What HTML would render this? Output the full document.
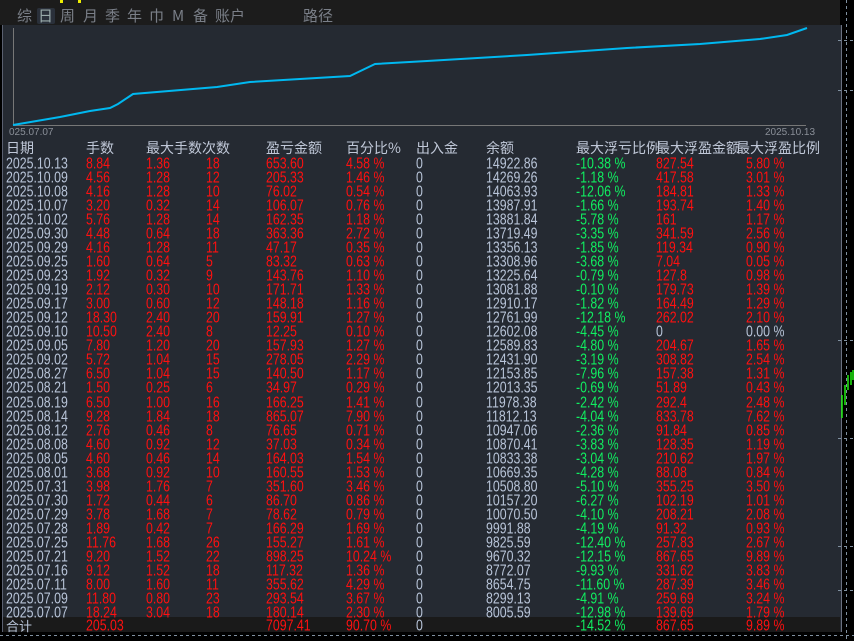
<!DOCTYPE html><html><head><meta charset="utf-8"><style>
body{margin:0;width:854px;height:641px;background:#000;position:relative;overflow:hidden;font-family:"Liberation Sans Narrow","Liberation Sans","Noto Sans CJK SC",sans-serif;}
.top{position:absolute;left:0;top:0;width:840px;height:25px;background:#1c1c1c;}
.panel{position:absolute;left:2px;top:25px;width:838px;height:607px;background:#252a32;border-left:1px solid #5a6070;border-right:1px solid #6a7080;}
.tab{position:absolute;top:7px;font-size:15px;color:#7a7f88;font-family:"Noto Sans CJK SC",sans-serif;line-height:18px;}
.r{position:absolute;left:0;width:840px;height:14px;font-size:13px;line-height:14px;white-space:nowrap;}
.r span{position:absolute;top:0;transform:scale(0.95,1.18);transform-origin:0 50%}
.h span{transform:none}
.w{color:#b8c4d8}.d{color:#ff1010}.g{color:#10ee60}
.h{font-family:"Noto Sans CJK SC",sans-serif;font-size:14px;color:#c0c8d8}
</style></head><body>
<div class="top"></div>
<div style="position:absolute;left:60px;top:0;width:3px;height:3px;background:#ee0"></div>
<div style="position:absolute;left:78px;top:0;width:3px;height:3px;background:#ee0"></div>
<div style="position:absolute;left:37px;top:8px;width:18px;height:16px;background:#2a303a;border-radius:2px"></div>
<div class="tab" style="left:17px">综</div><div class="tab" style="left:38px;color:#9aa">日</div><div class="tab" style="left:60px">周</div><div class="tab" style="left:83px">月</div><div class="tab" style="left:105px">季</div><div class="tab" style="left:127px">年</div><div class="tab" style="left:149px">巾</div><div class="tab" style="left:172px">M</div><div class="tab" style="left:193px">备</div><div class="tab" style="left:215px">账户</div><div class="tab" style="left:303px">路径</div>
<div class="panel"></div>
<svg style="position:absolute;left:0;top:0" width="854" height="641">
<line x1="13.5" y1="28" x2="13.5" y2="126" stroke="#777"/>
<line x1="13" y1="125.5" x2="806" y2="125.5" stroke="#777"/>
<polyline fill="none" stroke="#00b8f0" stroke-width="2" points="13,125 60,117 90,111 110,108 118,104 133,94 217,87 250,82 300,79 350,76 375,64 427,61 527,55 627,48 700,44 760,39 787,35 807,28"/>
<text x="9" y="135" font-size="10" fill="#8a8f98" font-family="Liberation Sans">025.07.07</text>
<text x="765" y="135" font-size="10" fill="#8a8f98" font-family="Liberation Sans">2025.10.13</text>
<g stroke="#8090a0" stroke-dasharray="3,3"><line x1="846.5" y1="0" x2="846.5" y2="641"/><line x1="0" y1="635.5" x2="854" y2="635.5"/><line x1="838" y1="340.5" x2="854" y2="340.5"/><line x1="838" y1="438.5" x2="854" y2="438.5"/><line x1="838" y1="546.5" x2="854" y2="546.5"/><line x1="838" y1="590.5" x2="854" y2="590.5"/><line x1="838" y1="90.5" x2="854" y2="90.5"/><line x1="838" y1="40.5" x2="854" y2="40.5"/></g>
<g stroke="#20ee10" stroke-width="1.5"><line x1="842" y1="395" x2="842" y2="418"/><line x1="845" y1="385" x2="845" y2="405"/><line x1="848" y1="375" x2="848" y2="390"/><line x1="851" y1="372" x2="851" y2="385"/><line x1="853" y1="370" x2="853" y2="380"/></g>
</svg>
<div style="position:absolute;left:3px;top:617px;width:837px;height:15px;background:#1a1a1a"></div>
<div class="r h" style="top:141px;height:18px"><span style="left:6px">日期</span><span style="left:86px">手数</span><span style="left:146px">最大手数次数</span><span style="left:266px">盈亏金额</span><span style="left:346px">百分比%</span><span style="left:416px">出入金</span><span style="left:486px">余额</span><span style="left:576px">最大浮亏比例</span><span style="left:656px">最大浮盈金额</span><span style="left:736px">最大浮盈比例</span></div>
<div id="rows"></div>
<script>
var d=`2025.10.13|8.84|1.36|18|653.60|4.58 %|14922.86|-10.38 %|827.54|5.80 %
2025.10.09|4.56|1.28|12|205.33|1.46 %|14269.26|-1.18 %|417.58|3.01 %
2025.10.08|4.16|1.28|10|76.02|0.54 %|14063.93|-12.06 %|184.81|1.33 %
2025.10.07|3.20|0.32|14|106.07|0.76 %|13987.91|-1.66 %|193.74|1.40 %
2025.10.02|5.76|1.28|14|162.35|1.18 %|13881.84|-5.78 %|161|1.17 %
2025.09.30|4.48|0.64|18|363.36|2.72 %|13719.49|-3.35 %|341.59|2.56 %
2025.09.29|4.16|1.28|11|47.17|0.35 %|13356.13|-1.85 %|119.34|0.90 %
2025.09.25|1.60|0.64|5|83.32|0.63 %|13308.96|-3.68 %|7.04|0.05 %
2025.09.23|1.92|0.32|9|143.76|1.10 %|13225.64|-0.79 %|127.8|0.98 %
2025.09.19|2.12|0.30|10|171.71|1.33 %|13081.88|-0.10 %|179.73|1.39 %
2025.09.17|3.00|0.60|12|148.18|1.16 %|12910.17|-1.82 %|164.49|1.29 %
2025.09.12|18.30|2.40|20|159.91|1.27 %|12761.99|-12.18 %|262.02|2.10 %
2025.09.10|10.50|2.40|8|12.25|0.10 %|12602.08|-4.45 %|0|0.00 %
2025.09.05|7.80|1.20|20|157.93|1.27 %|12589.83|-4.80 %|204.67|1.65 %
2025.09.02|5.72|1.04|15|278.05|2.29 %|12431.90|-3.19 %|308.82|2.54 %
2025.08.27|6.50|1.04|15|140.50|1.17 %|12153.85|-7.96 %|157.38|1.31 %
2025.08.21|1.50|0.25|6|34.97|0.29 %|12013.35|-0.69 %|51.89|0.43 %
2025.08.19|6.50|1.00|16|166.25|1.41 %|11978.38|-2.42 %|292.4|2.48 %
2025.08.14|9.28|1.84|18|865.07|7.90 %|11812.13|-4.04 %|833.78|7.62 %
2025.08.12|2.76|0.46|8|76.65|0.71 %|10947.06|-2.36 %|91.84|0.85 %
2025.08.08|4.60|0.92|12|37.03|0.34 %|10870.41|-3.83 %|128.35|1.19 %
2025.08.05|4.60|0.46|14|164.03|1.54 %|10833.38|-3.04 %|210.62|1.97 %
2025.08.01|3.68|0.92|10|160.55|1.53 %|10669.35|-4.28 %|88.08|0.84 %
2025.07.31|3.98|1.76|7|351.60|3.46 %|10508.80|-5.10 %|355.25|3.50 %
2025.07.30|1.72|0.44|6|86.70|0.86 %|10157.20|-6.27 %|102.19|1.01 %
2025.07.29|3.78|1.68|7|78.62|0.79 %|10070.50|-4.10 %|208.21|2.08 %
2025.07.28|1.89|0.42|7|166.29|1.69 %|9991.88|-4.19 %|91.32|0.93 %
2025.07.25|11.76|1.68|26|155.27|1.61 %|9825.59|-12.40 %|257.83|2.67 %
2025.07.21|9.20|1.52|22|898.25|10.24 %|9670.32|-12.15 %|867.65|9.89 %
2025.07.16|9.12|1.52|18|117.32|1.36 %|8772.07|-9.93 %|331.62|3.83 %
2025.07.11|8.00|1.60|11|355.62|4.29 %|8654.75|-11.60 %|287.39|3.46 %
2025.07.09|11.80|0.80|23|293.54|3.67 %|8299.13|-4.91 %|259.69|3.24 %
2025.07.07|18.24|3.04|18|180.14|2.30 %|8005.59|-12.98 %|139.69|1.79 %`.split("\n");
var h="";d.forEach(function(l,i){var c=l.split("|");var y=157+i*14.03;
var z=c[8]=="0";
h+='<div class="r" style="top:'+y+'px"><span class="w" style="left:6px">'+c[0]+'</span><span class="d" style="left:86px">'+c[1]+'</span><span class="d" style="left:146px">'+c[2]+'</span><span class="d" style="left:206px">'+c[3]+'</span><span class="d" style="left:266px">'+c[4]+'</span><span class="d" style="left:346px">'+c[5]+'</span><span class="w" style="left:416px">0</span><span class="w" style="left:486px">'+c[6]+'</span><span class="g" style="left:576px">'+c[7]+'</span><span class="'+(z?'w':'d')+'" style="left:656px">'+c[8]+'</span><span class="'+(z?'w':'d')+'" style="left:746px">'+c[9]+'</span></div>';});
h+='<div class="r" style="top:619px"><span class="w" style="left:6px;font-family:Noto Sans CJK SC,sans-serif;transform:none">合计</span><span class="d" style="left:86px">205.03</span><span class="d" style="left:266px">7097.41</span><span class="d" style="left:346px">90.70 %</span><span class="w" style="left:416px">0</span><span class="g" style="left:576px">-14.52 %</span><span class="d" style="left:656px">867.65</span><span class="d" style="left:746px">9.89 %</span></div>';
document.getElementById("rows").innerHTML=h;
</script>
</body></html>
